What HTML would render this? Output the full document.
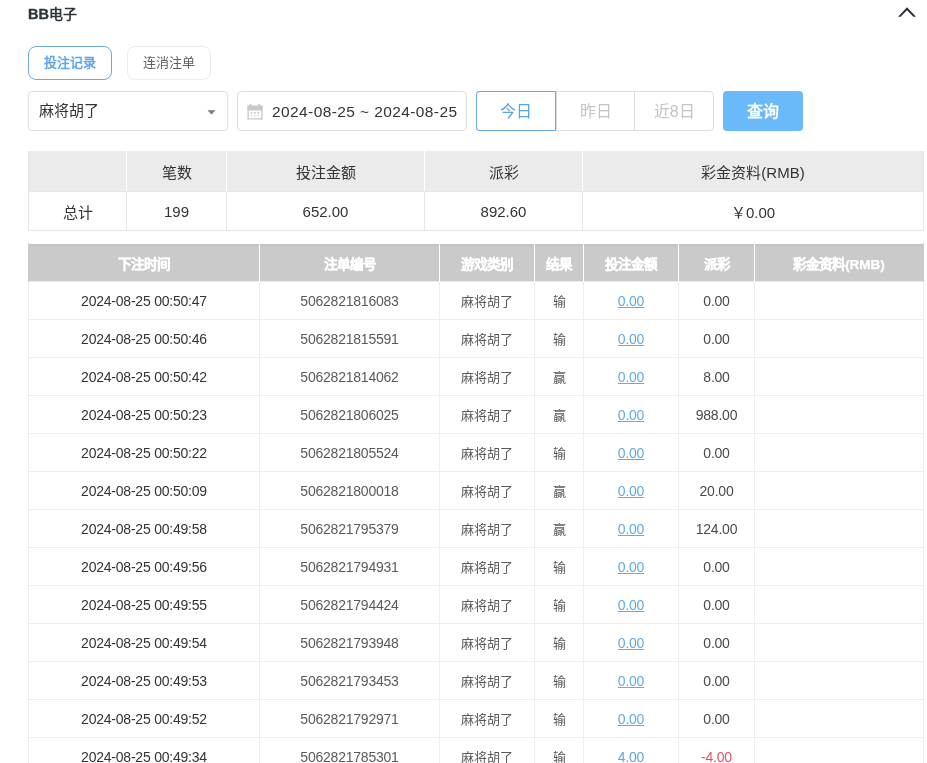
<!DOCTYPE html>
<html lang="zh-CN"><head><meta charset="utf-8">
<style>
*{box-sizing:border-box;margin:0;padding:0}
body{-webkit-font-smoothing:antialiased;will-change:transform}
html,body{width:927px;height:763px;overflow:hidden;background:#fff;font-family:"Liberation Sans",sans-serif;color:#333}
.abs{position:absolute}
.title{left:28px;top:4px;font-size:14.5px;font-weight:bold;color:#2c3440;line-height:20px}
.chev{left:897px;top:6px;width:20px;height:14px}
.tab{top:46px;height:34px;width:84px;border:1px solid #ebebeb;border-radius:8px;font-size:13px;line-height:32px;text-align:center;color:#606060}
.tab.on{border-color:#6ea9de;color:#5ea6e8;font-weight:bold}
.box{top:91px;height:40px;border:1px solid #dedede;border-radius:4px;font-size:15px;line-height:38px}
.btng{top:91px;height:40px;left:476px;width:238px;border:1px solid #dedede;border-radius:4px;display:flex}
.btng div{width:79px;text-align:center;font-size:16px;line-height:40px;color:#c4c4c4;border-left:1px solid #dedede}
.btng div.on{border:1px solid #6ea9de;margin:-1px 0 -1px -1px;width:80px;color:#5aa5e6;border-radius:3px 0 0 3px;line-height:40px}
.query{left:723px;top:91px;width:80px;height:40px;background:#6ab9f9;border-radius:4px;color:#fff;font-size:16px;font-weight:bold;line-height:41px;text-align:center}
table{border-collapse:collapse;position:absolute;table-layout:fixed}
.sum{left:28px;top:151px;width:896px}
.sum td{border:1px solid #e6e6e6;text-align:center;font-size:15px;color:#333;height:39px}
.sum tr.h td{background:#ebebeb;border-top-color:#ebebeb;border-right-color:#fff;height:40px}
.sum tr.h td:last-child{border-right-color:#e6e6e6}
.det{left:28px;top:243px;width:896px}
.det th{background:linear-gradient(#fff 0 1px,#c5c5c5 1px 3px,#cacaca 3px);color:#fff;font-size:13.5px;font-weight:bold;-webkit-text-stroke:0.25px #fff;height:38px;border-right:1px solid #fff;padding-top:2px}
.det th:last-child{border-right:1px solid #cacaca}
.det th:first-child{border-left:1px solid #cacaca}
.det td{border:1px solid #eeeeee;text-align:center;font-size:14px;letter-spacing:-0.22px;color:#333;height:38px}
.det td.n{color:#5a5a5a}
.det td.p{color:#4a4a4a}
.det td{padding-top:2px}
.det td.g{font-size:13px;letter-spacing:0;padding-top:1px}
.det td a{color:#62abe8;text-decoration:underline}
.det td.b{color:#5aa7e8}
.det td.r{color:#df5266}
</style></head><body>
<div class="abs title"><span style="-webkit-text-stroke:0.35px #2c3440">BB</span><span style="font-size:14px">电子</span></div>
<svg class="abs" style="left:890px;top:0" width="34" height="24" viewBox="0 0 34 24"><polygon points="8,16.8 17,7.2 26,16.8 23.4,16.8 17,10.2 10.6,16.8" fill="#2b303b"/></svg>
<div class="abs tab on" style="left:28px">投注记录</div>
<div class="abs tab" style="left:127px">连消注单</div>
<div class="abs box" style="left:28px;width:200px;padding-left:10px">麻将胡了
<svg class="abs" style="left:178px;top:18px" width="10" height="6" viewBox="0 0 10 6"><path d="M0.5 0.2 L8.5 0.2 L4.5 4.6 Z" fill="#7a7a7a"/></svg></div>
<div class="abs box" style="left:237px;width:230px;padding-left:34px;color:#333;font-size:15.5px;letter-spacing:0.4px;line-height:39px">2024-08-25 ~ 2024-08-25
<svg class="abs" style="left:8.5px;top:12px" width="16" height="17" viewBox="0 0 16 17"><g fill="#c9c9c9"><rect x="0.5" y="1.5" width="15" height="5"/><rect x="0.5" y="1.5" width="1.3" height="14"/><rect x="14.2" y="1.5" width="1.3" height="14"/><rect x="0.5" y="14.2" width="15" height="1.3"/><rect x="2.6" y="0" width="2" height="3"/><rect x="11.4" y="0" width="2" height="3"/><rect x="3.5" y="8" width="1.8" height="1.6"/><rect x="7" y="8" width="1.8" height="1.6"/><rect x="10.4" y="8" width="1.8" height="1.6"/><rect x="3.5" y="11.2" width="1.8" height="1.6" opacity=".6"/><rect x="7" y="11.2" width="1.8" height="1.6" opacity=".6"/><rect x="10.4" y="11.2" width="1.8" height="1.6" opacity=".6"/></g></svg></div>
<div class="abs btng"><div class="on">今日</div><div>昨日</div><div>近8日</div></div>
<div class="abs query">查询</div>

<table class="sum">
<colgroup><col style="width:98px"><col style="width:100px"><col style="width:198px"><col style="width:158px"><col></colgroup>
<tr class="h"><td></td><td>笔数</td><td>投注金额</td><td>派彩</td><td>彩金资料(RMB)</td></tr>
<tr><td>总计</td><td>199</td><td>652.00</td><td>892.60</td><td>￥0.00</td></tr>
</table>

<table class="det">
<colgroup><col style="width:231px"><col style="width:180px"><col style="width:95px"><col style="width:49px"><col style="width:95px"><col style="width:76px"><col></colgroup>
<tr><th>下注时间</th><th>注单编号</th><th>游戏类别</th><th>结果</th><th>投注金额</th><th>派彩</th><th>彩金资料(RMB)</th></tr>
<tr><td>2024-08-25 00:50:47</td><td class="n">5062821816083</td><td class="n g">麻将胡了</td><td class="n g">输</td><td><a>0.00</a></td><td class="p">0.00</td><td></td></tr>
<tr><td>2024-08-25 00:50:46</td><td class="n">5062821815591</td><td class="n g">麻将胡了</td><td class="n g">输</td><td><a>0.00</a></td><td class="p">0.00</td><td></td></tr>
<tr><td>2024-08-25 00:50:42</td><td class="n">5062821814062</td><td class="n g">麻将胡了</td><td class="n g">赢</td><td><a>0.00</a></td><td class="p">8.00</td><td></td></tr>
<tr><td>2024-08-25 00:50:23</td><td class="n">5062821806025</td><td class="n g">麻将胡了</td><td class="n g">赢</td><td><a>0.00</a></td><td class="p">988.00</td><td></td></tr>
<tr><td>2024-08-25 00:50:22</td><td class="n">5062821805524</td><td class="n g">麻将胡了</td><td class="n g">输</td><td><a>0.00</a></td><td class="p">0.00</td><td></td></tr>
<tr><td>2024-08-25 00:50:09</td><td class="n">5062821800018</td><td class="n g">麻将胡了</td><td class="n g">赢</td><td><a>0.00</a></td><td class="p">20.00</td><td></td></tr>
<tr><td>2024-08-25 00:49:58</td><td class="n">5062821795379</td><td class="n g">麻将胡了</td><td class="n g">赢</td><td><a>0.00</a></td><td class="p">124.00</td><td></td></tr>
<tr><td>2024-08-25 00:49:56</td><td class="n">5062821794931</td><td class="n g">麻将胡了</td><td class="n g">输</td><td><a>0.00</a></td><td class="p">0.00</td><td></td></tr>
<tr><td>2024-08-25 00:49:55</td><td class="n">5062821794424</td><td class="n g">麻将胡了</td><td class="n g">输</td><td><a>0.00</a></td><td class="p">0.00</td><td></td></tr>
<tr><td>2024-08-25 00:49:54</td><td class="n">5062821793948</td><td class="n g">麻将胡了</td><td class="n g">输</td><td><a>0.00</a></td><td class="p">0.00</td><td></td></tr>
<tr><td>2024-08-25 00:49:53</td><td class="n">5062821793453</td><td class="n g">麻将胡了</td><td class="n g">输</td><td><a>0.00</a></td><td class="p">0.00</td><td></td></tr>
<tr><td>2024-08-25 00:49:52</td><td class="n">5062821792971</td><td class="n g">麻将胡了</td><td class="n g">输</td><td><a>0.00</a></td><td class="p">0.00</td><td></td></tr>
<tr><td>2024-08-25 00:49:34</td><td class="n">5062821785301</td><td class="n g">麻将胡了</td><td class="n g">输</td><td class="b">4.00</td><td class="r">-4.00</td><td></td></tr>
</table>
</body></html>
